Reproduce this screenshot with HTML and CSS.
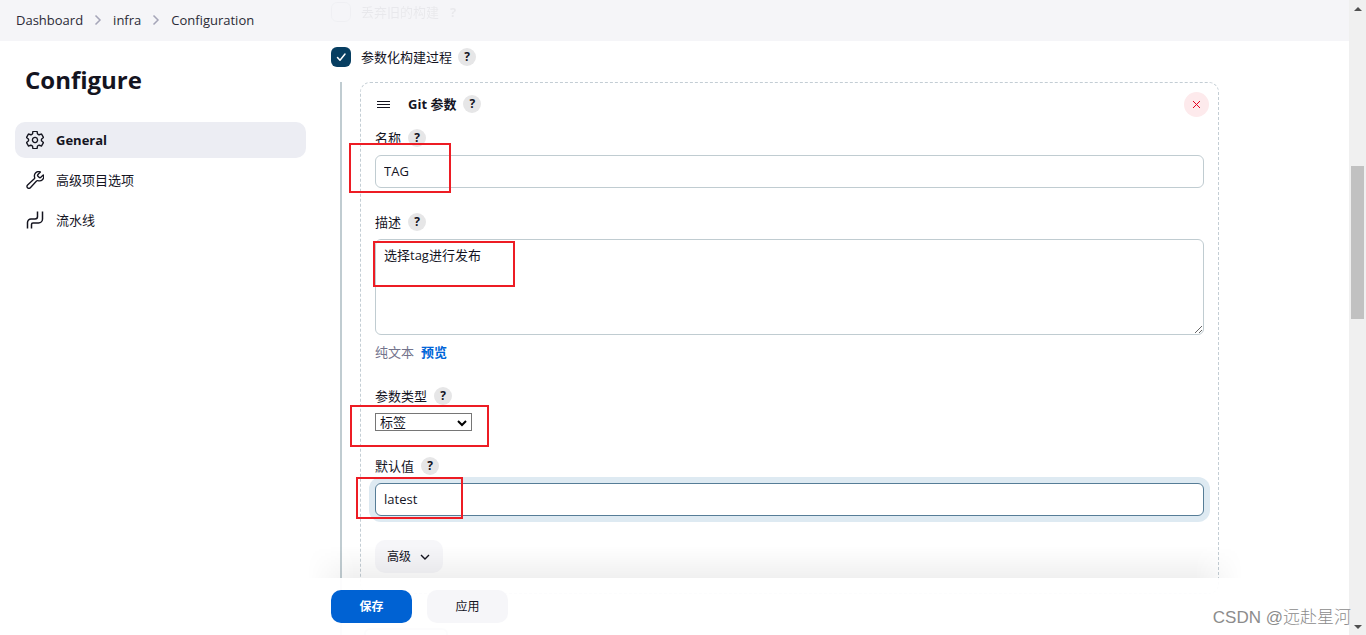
FILE: index.html
```html
<!DOCTYPE html>
<html lang="zh-CN">
<head>
<meta charset="utf-8">
<title>infra Config</title>
<link rel="stylesheet" href="styles.css">
</head>
<body>
<div class="window">
  <div class="page">
    <header class="topbar">
      <nav class="crumbs" aria-label="Breadcrumb">
        <a href="#">Dashboard</a>
        <svg class="crumb-sep" viewBox="0 0 8 12"><path d="M1.500 1.500 6 6l-4.500 4.500"/></svg>
        <a href="#">infra</a>
        <svg class="crumb-sep" viewBox="0 0 8 12"><path d="M1.500 1.500 6 6l-4.500 4.500"/></svg>
        <a href="#">Configuration</a>
      </nav>
      <div class="ghost check-row">
        <input class="checkbox" type="checkbox" id="discard">
        <label for="discard">丢弃旧的构建</label>
        <span class="ghost-help">?</span>
      </div>
    </header>
    <div class="layout">
      <aside class="sidebar">
        <h1>Configure</h1>
        <nav class="tasks">
          <a class="task active" href="#">
            <svg class="task-icon" viewBox="32 32 448 448"><path d="M262.290 192.310a64 64 0 1057.400 57.400 64.130 64.130 0 00-57.400-57.400zM416.390 256a154.340 154.340 0 01-1.530 20.790l45.210 35.460a10.810 10.810 0 012.450 13.750l-42.770 74a10.810 10.810 0 01-13.140 4.590l-44.900-18.080a16.110 16.110 0 00-15.170 1.750A164.480 164.480 0 01325 400.800a15.940 15.940 0 00-8.820 12.140l-6.730 47.890a11.080 11.080 0 01-10.680 9.170h-85.540a11.110 11.110 0 01-10.690-8.870l-6.720-47.820a16.070 16.070 0 00-9-12.220 155.300 155.300 0 01-21.460-12.570 16 16 0 00-15.110-1.710l-44.890 18.070a10.810 10.810 0 01-13.140-4.580l-42.770-74a10.800 10.800 0 012.450-13.750l38.210-30a16.050 16.050 0 006-14.080c-.36-4.170-.58-8.330-.58-12.500s.21-8.270.58-12.350a16 16 0 00-6.070-13.940l-38.190-30A10.810 10.810 0 0149.480 186l42.770-74a10.810 10.810 0 0113.140-4.590l44.900 18.080a16.110 16.110 0 0015.170-1.750A164.480 164.480 0 01187 111.200a15.940 15.940 0 008.820-12.140l6.730-47.890A11.080 11.080 0 01213.230 42h85.540a11.110 11.110 0 0110.690 8.870l6.720 47.820a16.070 16.070 0 009 12.220 155.300 155.300 0 0121.460 12.570 16 16 0 0015.110 1.710l44.890-18.070a10.810 10.810 0 0113.140 4.580l42.770 74a10.800 10.800 0 01-2.450 13.750l-38.210 30a16.050 16.050 0 00-6.050 14.080c.33 4.140.55 8.300.55 12.470z"/></svg>
            General</a>
          <a class="task" href="#">
            <svg class="task-icon" viewBox="24 32 448 448"><path d="M393.870 190a32.100 32.100 0 01-45.250 0l-26.570-26.570a32.090 32.090 0 010-45.260L382.190 58a1 1 0 00-.3-1.640c-38.820-16.640-89.150-8.160-121.110 23.570-30.580 30.350-32.320 76-21.120 115.840a31.930 31.930 0 01-9.060 32.080L64 380a48.170 48.170 0 1068 68l153.860-167a31.930 31.930 0 0131.600-9.130c39.540 10.590 84.540 8.600 114.720-21.190 32.490-32 39.500-88.560 23.750-120.930a1 1 0 00-1.600-.26z"/></svg>
            高级项目选项</a>
          <a class="task" href="#">
            <svg class="task-icon flow" viewBox="0 0 18 18"><path d="M1.500 17.500V11.500a3.500 3.500 0 0 1 3.500-3.500h4a2.500 2.500 0 0 0 2.500-2.500V.5M5.500 17.500V13.500a1.500 1.500 0 0 1 1.500-1.500h5.500a4 4 0 0 0 4-4V.5"/></svg>
            流水线</a>
        </nav>
      </aside>
      <main class="content">
        <div class="check-row">
          <input class="checkbox" type="checkbox" id="param" checked>
          <label for="param">参数化构建过程</label>
          <button class="help" type="button" aria-label="帮助">?</button>
        </div>
        <div class="nested">
          <section class="card">
            <div class="card-head">
              <svg class="drag" viewBox="0 0 14 9"><path d="M0 1.500h13M0 4.500h13M0 7.500h13"/></svg>
              <b>Git 参数</b>
              <button class="help" type="button" aria-label="帮助">?</button>
              <button class="remove" type="button" aria-label="删除"><svg viewBox="0 0 9 9"><path d="M1 1l7 7M8 1L1 8"/></svg></button>
            </div>
            <div class="field">
              <div class="field-label"><label for="name">名称</label><button class="help" type="button" aria-label="帮助">?</button></div>
              <input class="text" type="text" id="name" value="TAG">
              <span class="mark mark-name"></span>
            </div>
            <div class="field">
              <div class="field-label"><label for="desc">描述</label><button class="help" type="button" aria-label="帮助">?</button></div>
              <textarea class="text area" id="desc">选择tag进行发布</textarea>
              <div class="preview"><span>纯文本</span><a href="#">预览</a></div>
              <span class="mark mark-desc"></span>
            </div>
            <div class="field">
              <div class="field-label"><label for="type">参数类型</label><button class="help" type="button" aria-label="帮助">?</button></div>
              <select class="select" id="type"><option>标签</option></select>
              <span class="mark mark-type"></span>
            </div>
            <div class="field">
              <div class="field-label"><label for="default">默认值</label><button class="help" type="button" aria-label="帮助">?</button></div>
              <input class="text focused" type="text" id="default" value="latest">
              <span class="mark mark-default"></span>
            </div>
            <button class="advanced" type="button">高级
              <svg viewBox="0 0 10 6"><path d="M1 1l4 4 4-4"/></svg></button>
          </section>
          <button class="add" type="button" aria-label="添加参数"></button>
        </div>
        <div class="actions">
          <button class="btn primary" type="button">保存</button>
          <button class="btn" type="button">应用</button>
        </div>
      </main>
    </div>
    <div class="watermark">CSDN @远赴星河</div>
  </div>
  <div class="scrollbar" aria-hidden="true">
    <span class="arrow up"></span>
    <span class="track"><span class="thumb"></span></span>
    <span class="arrow down"></span>
  </div>
</div>
</body>
</html>
```

FILE: styles.css
```css
* { box-sizing: border-box; }

body {
  margin: 0;
  font: 400 13px/20px "Open Sans", "Noto Sans CJK SC", sans-serif;
  color: #14141f;
  background: #fff;
}

button, input, textarea, select { font: inherit; color: inherit; margin: 0; }
button { border: 0; padding: 0; }
a { color: inherit; text-decoration: none; }
svg { fill: none; stroke: currentColor; flex: none; }

.window { display: flex; height: 100vh; overflow: hidden; }
.page {
  flex: 1;
  min-width: 0;
  position: relative;
  display: flex;
  flex-direction: column;
}

.topbar { position: relative; background: #f5f5f8; padding: 10px 16px 11px; }
.crumbs { display: flex; align-items: center; gap: 11px; color: #2a2a36; }
.crumb-sep { width: 8px; height: 12px; color: #a5a5b8; stroke-width: 1.5; }

.check-row { display: flex; align-items: center; gap: 10px; height: 20px; }
.check-row .help { margin-left: -4px; }
.ghost { position: absolute; left: 331px; top: 2px; opacity: 0.05; }
.ghost-help { width: 18px; margin-left: -5px; text-align: center; font-weight: 700; }

.checkbox {
  appearance: none;
  width: 20px;
  height: 20px;
  border: 1px solid #8d98a5;
  border-radius: 6px;
}
.checkbox:checked {
  border: 0;
  background: #073e61 url("data:image/svg+xml,%3Csvg xmlns='http://www.w3.org/2000/svg' viewBox='0 0 20 20' fill='none' stroke='white' stroke-width='1.5' stroke-linecap='round' stroke-linejoin='round'%3E%3Cpath d='M6.500 10.500l2.500 2.700 5-6.200'/%3E%3C/svg%3E") center / 20px;
}

.layout { flex: 1; min-height: 0; display: flex; gap: 25px; padding: 0 15px; }

.sidebar { flex: none; width: 291px; }
h1 { margin: 23px 10px 26px; font-size: 24px; line-height: 32px; font-weight: 700; }
.tasks { display: flex; flex-direction: column; gap: 4px; }
.task {
  display: flex;
  align-items: center;
  gap: 12px;
  height: 36px;
  padding: 0 11px;
  border-radius: 10px;
}
.task.active { background: #ecedf3; font-weight: 700; }
.task-icon { width: 18px; height: 18px; stroke-width: 34; stroke-linejoin: round; stroke-linecap: round; }
.task-icon.flow { stroke-width: 1.5; stroke-linecap: butt; }

.content {
  flex: 1;
  max-width: 888px;
  position: relative;
  display: flex;
  flex-direction: column;
  padding-top: 6px;
}

.help {
  width: 18px;
  height: 18px;
  border-radius: 50%;
  background: #e6e6e7;
  font-size: 12px;
  line-height: 18px;
  font-weight: 700;
}

.nested {
  margin: 15px 0 0 9px;
  border-left: 2px solid #c0ccd1;
  padding-left: 18px;
}

.card {
  border: 1px dashed #c3cdd4;
  border-radius: 10px;
  padding: 9px 14px 20px;
}
.card-head { display: flex; align-items: center; height: 24px; margin-bottom: 12px; }
.card-head b { margin: 0 7px 0 17px; font-weight: 700; }
.drag { width: 14px; height: 9px; margin-left: 2px; stroke-width: 1; }
.remove {
  display: grid;
  place-items: center;
  width: 25px;
  height: 25px;
  margin: 0 -5px 0 auto;
  border-radius: 50%;
  background: #fdeaec;
  color: #e6001f;
}
.remove svg { width: 9px; height: 9px; stroke-width: 1; }

.field { position: relative; margin-bottom: 24px; }
.field-label { display: flex; align-items: center; gap: 7px; height: 20px; margin-bottom: 7px; }
.text {
  display: block;
  width: 100%;
  height: 33px;
  padding: 4px 8px 6px;
  border: 1px solid #c0ccd1;
  border-radius: 6px;
  background: #fff;
  outline: 0;
}
.area { height: 96px; padding-top: 5px; resize: vertical; }
.focused { border-color: #567d97; box-shadow: 0 0 0 6px #deeaf2; }
.preview { display: flex; gap: 7px; margin-top: 7px; color: #73738c; }
.preview a { color: #0065d8; font-weight: 700; }
.select {
  display: block;
  appearance: none;
  width: 97px;
  height: 18px;
  margin-bottom: 25px;
  padding: 0 20px 0 4px;
  border: 1px solid #767676;
  border-radius: 0;
  background: #fff url("data:image/svg+xml,%3Csvg xmlns='http://www.w3.org/2000/svg' viewBox='0 0 10 7' fill='none' stroke='black' stroke-width='2'%3E%3Cpath d='M1 1l4 4 4-4'/%3E%3C/svg%3E") no-repeat right 4px top 6px / 10px 7px;
  line-height: 16px;
}
.advanced {
  display: flex;
  align-items: center;
  gap: 9px;
  height: 33px;
  padding: 0 13px 0 12px;
  border-radius: 10px;
  background: #f6f6f9;
  font-size: 12px;
}
.advanced svg { width: 10px; height: 6px; stroke-width: 1.4; }

/* Callout frames over the form */
.mark { position: absolute; border: 2px solid #ed1c24; pointer-events: none; }
.mark-name { left: -26px; top: 15px; width: 102px; height: 50px; }
.mark-desc { left: -2px; top: 29px; width: 142px; height: 46px; }
.mark-type { left: -25px; top: 19px; width: 139px; height: 42px; }
.mark-default { left: -19px; top: 21px; width: 107px; height: 42px; }

.add {
  display: block;
  width: 84px;
  height: 32px;
  margin: 34px 0 0 4px;
  border: 2px solid #c0ccd1;
  border-radius: 6px;
  background: #fff;
}

.actions {
  position: absolute;
  left: 0;
  right: 0;
  bottom: 0;
  display: flex;
  gap: 15px;
  padding: 12px 0;
  background: rgba(255, 255, 255, 0.94);
}
.actions::before {
  content: "";
  position: absolute;
  left: -24px;
  right: -24px;
  bottom: 100%;
  height: 32px;
  background: linear-gradient(to top, rgba(0, 0, 0, 0.06), transparent);
  mask-image: linear-gradient(to right, transparent, #000 48px, #000 calc(100% - 48px), transparent);
  pointer-events: none;
}
.btn {
  width: 81px;
  height: 33px;
  border-radius: 10px;
  background: #f6f6f9;
  font-size: 12px;
}
.primary { background: #0062d3; color: #fff; font-weight: 700; }

.watermark {
  position: absolute;
  right: -2px;
  bottom: 5px;
  z-index: 1;
  font: 300 17px/24px "Liberation Sans", "Noto Sans CJK SC", sans-serif;
  color: #8c8c8c;
  white-space: nowrap;
}

.scrollbar {
  flex: none;
  width: 17px;
  display: flex;
  flex-direction: column;
  align-items: center;
  padding: 7px 0 6px;
  background: #f0f0f0;
}
.arrow { border: 4px solid transparent; }
.up { border-top: 0; border-bottom-color: #505050; }
.down { border-bottom: 0; border-top-color: #505050; }
.track { flex: 1; width: 13px; display: flex; flex-direction: column; padding-top: 155px; }
.thumb { height: 25%; min-height: 153px; background: #c1c1c1; }
```
